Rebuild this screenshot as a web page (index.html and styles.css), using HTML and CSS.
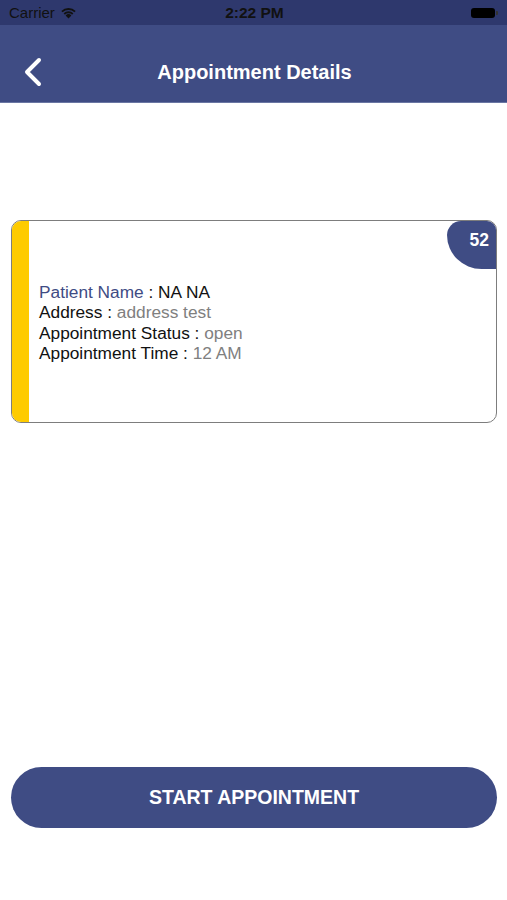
FILE: index.html
```html
<!DOCTYPE html>
<html lang="en">
<head>
    <meta charset="UTF-8">
    <meta name="viewport" content="width=device-width, initial-scale=1.0">
    <title>Appointment Details</title>
    <link rel="stylesheet" href="styles.css">
</head>
<body>
    <div id="phone">
        <div class="status-bar">
            <div class="carrier">
                Carrier
                <svg class="wifi" width="17" height="12" viewBox="0 0 17 12">
                    <path d="M8.5 11.5 L5.6 8.4 A4.2 4.2 0 0 1 11.4 8.4 Z" fill="#111"/>
                    <path d="M3.6 6.3 A7 7 0 0 1 13.4 6.3 L12.1 7.7 A5.1 5.1 0 0 0 4.9 7.7 Z" fill="#111"/>
                    <path d="M1.3 3.9 A10.3 10.3 0 0 1 15.7 3.9 L14.4 5.3 A8.4 8.4 0 0 0 2.6 5.3 Z" fill="#111"/>
                </svg>
            </div>
            <div class="clock">2:22 PM</div>
            <div class="battery">
                <span class="battery-body"></span>
                <span class="battery-tip"></span>
            </div>
        </div>
        <div class="nav-bar">
            <svg class="back" width="22" height="30" viewBox="0 0 22 30">
                <path d="M17 3 L5 15 L17 27" fill="none" stroke="#fff" stroke-width="4" stroke-linecap="round" stroke-linejoin="round"/>
            </svg>
            <h1>Appointment Details</h1>
        </div>

        <div class="content">
            <div class="card">
                <div class="stripe"></div>
                <div class="info">
                    <p><span class="label-blue">Patient Name</span> : NA NA</p>
                    <p>Address : <span class="value">address test</span></p>
                    <p>Appointment Status : <span class="value">open</span></p>
                    <p>Appointment Time : <span class="value">12 AM</span></p>
                </div>
                <div class="badge">52</div>
            </div>
        </div>

        <div class="footer">
            <button class="start-btn">START APPOINTMENT</button>
        </div>
    </div>
</body>
</html>
```
FILE: styles.css
```css
* {
    margin: 0;
    padding: 0;
    box-sizing: border-box;
}
body {
    font-family: "Liberation Sans", Arial, sans-serif;
    background: #fff;
}
#phone {
    width: 507px;
    height: 900px;
    display: flex;
    flex-direction: column;
    overflow: hidden;
}
.status-bar {
    height: 25px;
    background: #2e386d;
    display: flex;
    align-items: center;
    justify-content: space-between;
    padding: 0 9px 0 9px;
    color: #111;
    font-size: 15px;
}
.carrier {
    display: flex;
    align-items: center;
    gap: 5px;
    width: 120px;
}
.clock {
    font-weight: bold;
    font-size: 15.5px;
    margin-left: 2px;
}
.battery {
    width: 120px;
    display: flex;
    justify-content: flex-end;
    align-items: center;
}
.battery-body {
    width: 24px;
    height: 10px;
    background: #000;
    border-radius: 3px;
}
.battery-tip {
    width: 2px;
    height: 4px;
    background: #333;
    margin-left: 1px;
    border-radius: 0 1px 1px 0;
}
.nav-bar {
    height: 78px;
    background: #3f4c84;
    position: relative;
    display: flex;
    align-items: center;
    justify-content: center;
    padding-top: 18px;
    border-bottom: 1px solid #6a76a3;
}
.nav-bar .back {
    position: absolute;
    left: 22px;
    top: 32px;
}
.nav-bar h1 {
    color: #fff;
    font-size: 20px;
    font-weight: bold;
    margin-left: 2px;
}
.content {
    flex: 1;
    padding: 117px 10px 0 11px;
}
.card {
    position: relative;
    height: 203px;
    border: 1.5px solid #7d7d7d;
    border-radius: 10px;
    overflow: hidden;
    display: flex;
    align-items: center;
}
.stripe {
    width: 17px;
    align-self: stretch;
    background: #fecb00;
}
.info {
    padding-left: 10px;
    margin-top: 2px;
    font-size: 17.3px;
    line-height: 20.5px;
    color: #111;
}
.label-blue {
    color: #3f4c84;
}
.value {
    color: #808080;
}
.badge {
    position: absolute;
    top: 0;
    right: 0;
    width: 49px;
    height: 48px;
    background: #3f4c84;
    color: #fff;
    font-weight: bold;
    font-size: 17.5px;
    border-radius: 20px 0 0 100%;
    display: flex;
    justify-content: flex-end;
    padding: 9px 7px 0 0;
}
.footer {
    padding: 0 10px 72px 11px;
}
.start-btn {
    width: 100%;
    height: 61px;
    border: none;
    border-radius: 31px;
    background: #3f4c84;
    color: #fff;
    font-family: "Liberation Sans", Arial, sans-serif;
    font-weight: bold;
    font-size: 19.5px;
}
```
